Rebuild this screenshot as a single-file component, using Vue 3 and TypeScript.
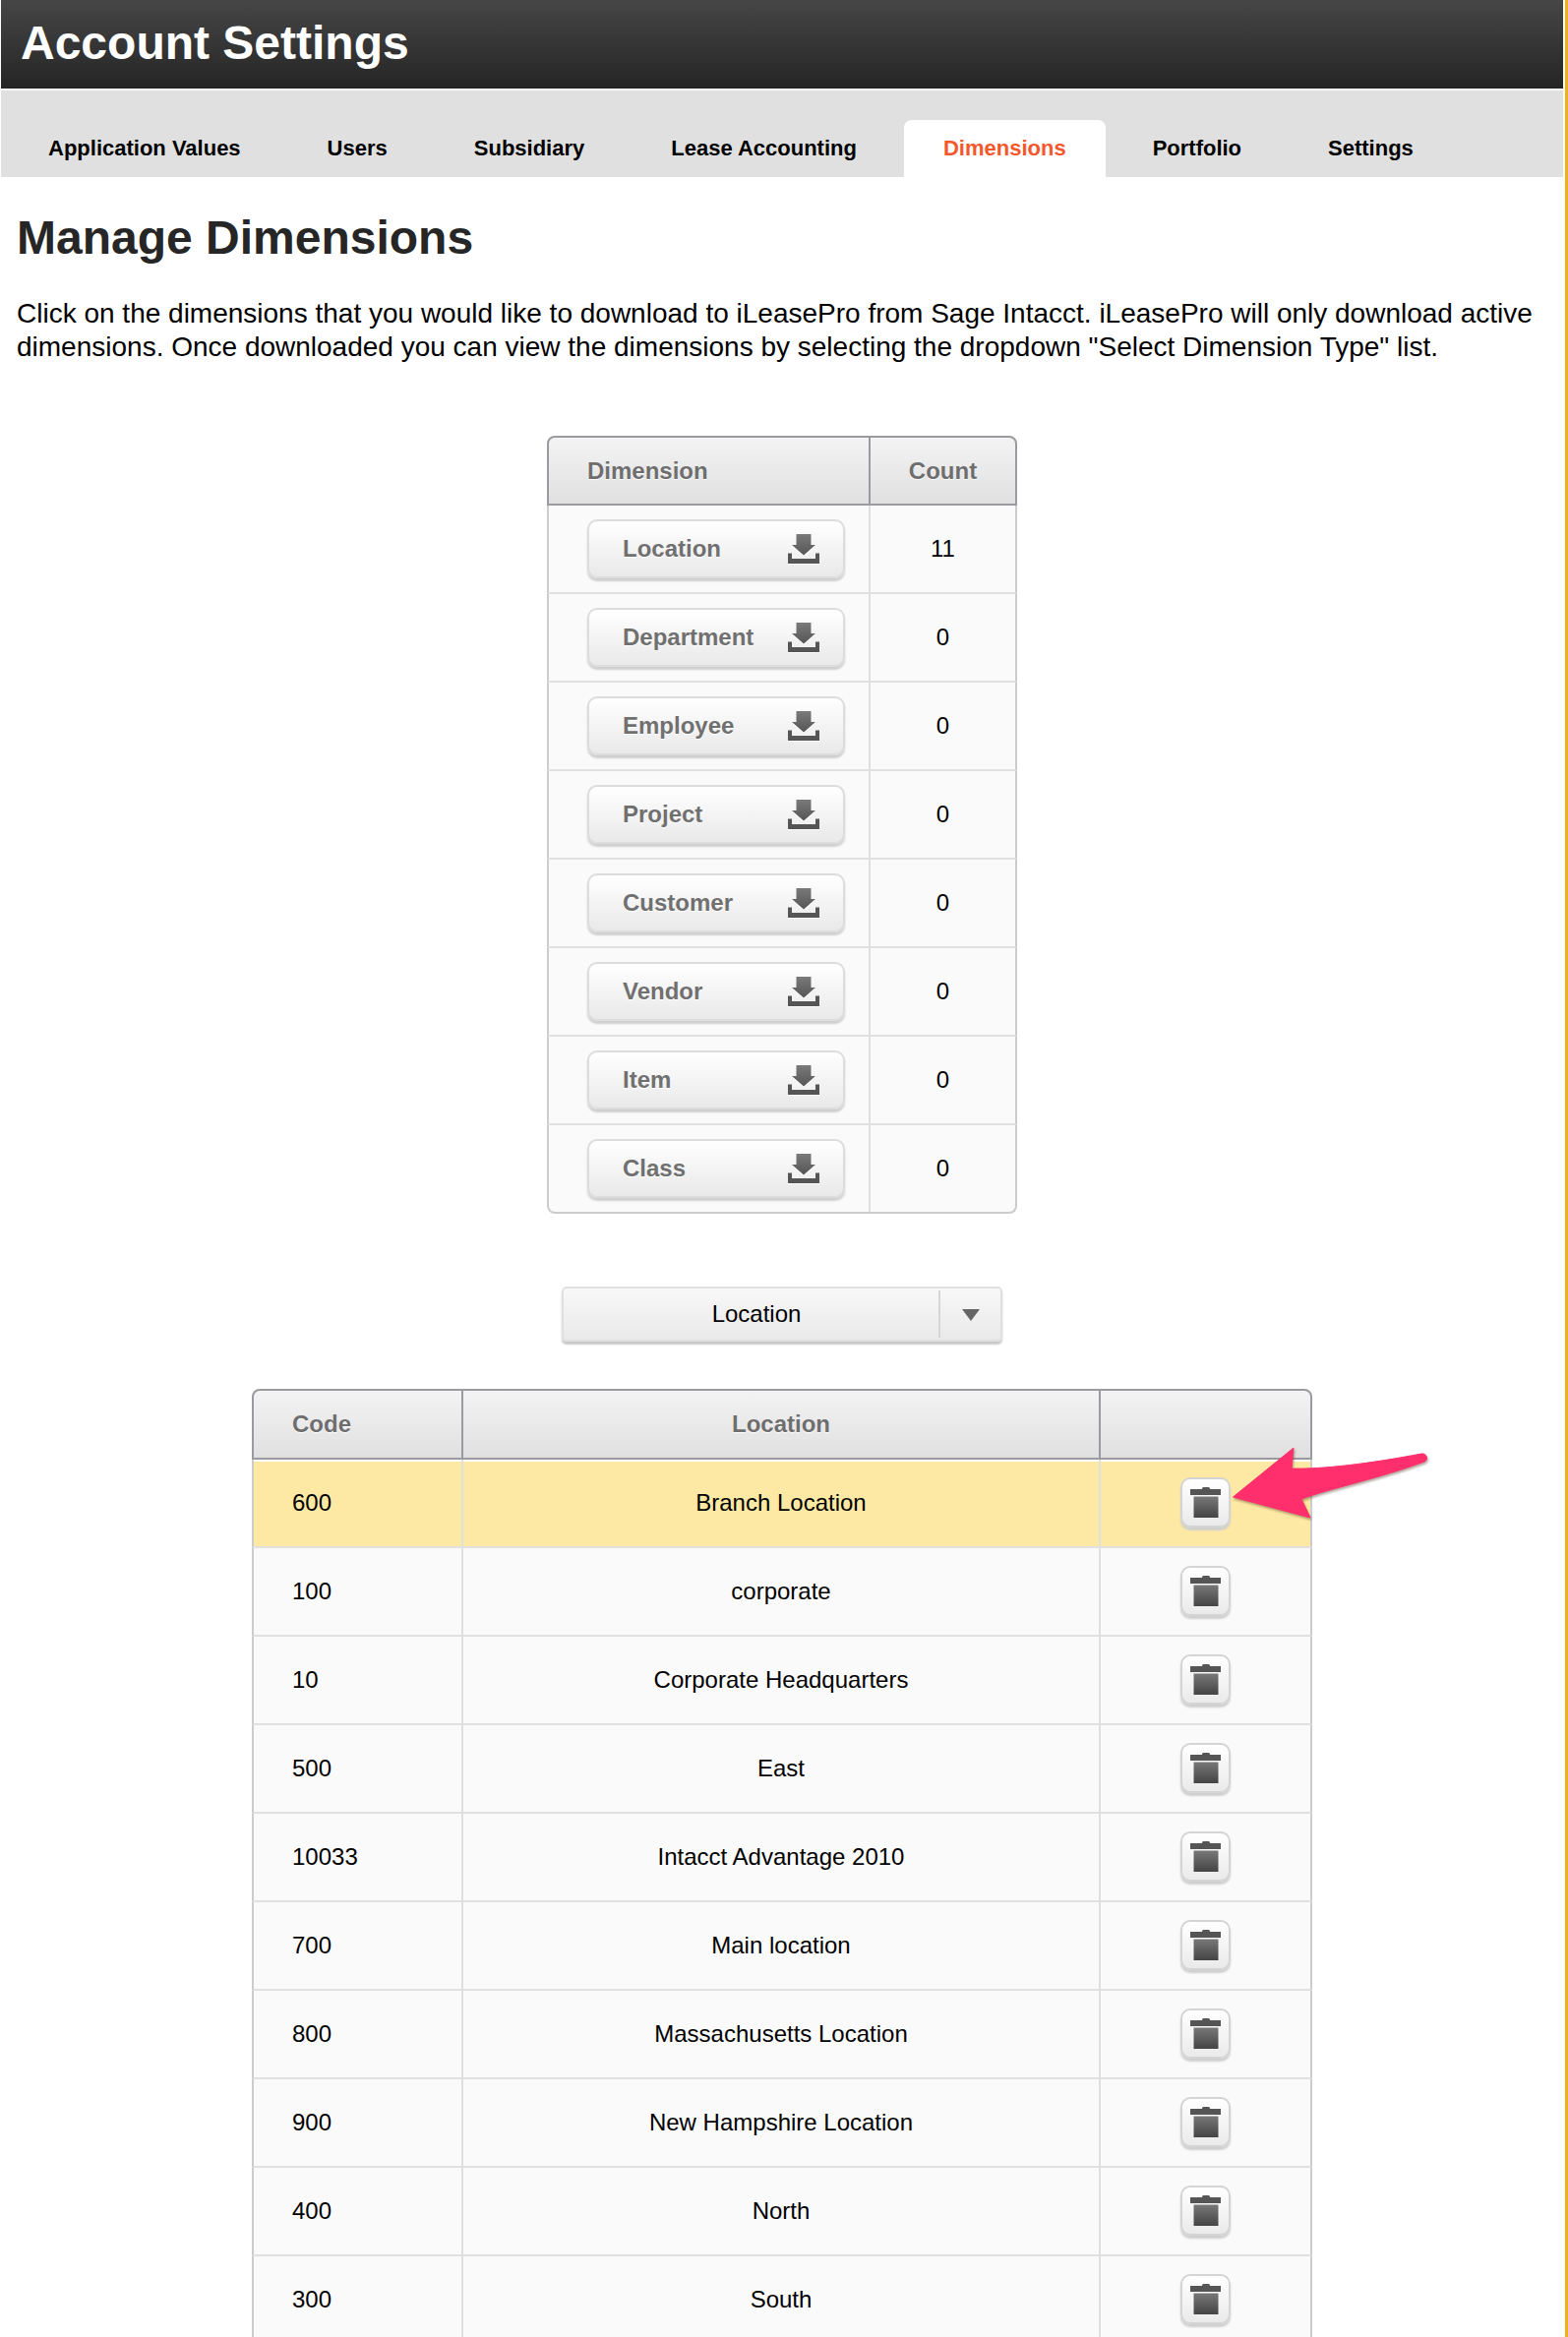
<script setup lang="ts">
const tabs: string[] = ['Application Values', 'Users', 'Subsidiary', 'Lease Accounting', 'Dimensions', 'Portfolio', 'Settings']
const dims: { name: string; count: number }[] = [
  { name: 'Location', count: 11 },
  { name: 'Department', count: 0 },
  { name: 'Employee', count: 0 },
  { name: 'Project', count: 0 },
  { name: 'Customer', count: 0 },
  { name: 'Vendor', count: 0 },
  { name: 'Item', count: 0 },
  { name: 'Class', count: 0 },
]
const locations: { code: string; name: string }[] = [
  { code: '600', name: 'Branch Location' },
  { code: '100', name: 'corporate' },
  { code: '10', name: 'Corporate Headquarters' },
  { code: '500', name: 'East' },
  { code: '10033', name: 'Intacct Advantage 2010' },
  { code: '700', name: 'Main location' },
  { code: '800', name: 'Massachusetts Location' },
  { code: '900', name: 'New Hampshire Location' },
  { code: '400', name: 'North' },
  { code: '300', name: 'South' },
]
</script>

<template>
  <div class="root">
    <svg class="defs" width="0" height="0" aria-hidden="true">
      <defs>
        <linearGradient id="iconGrad" x1="0" y1="0" x2="0" y2="1">
          <stop offset="0" stop-color="#7a7a7a" />
          <stop offset="1" stop-color="#555" />
        </linearGradient>
        <linearGradient id="binGrad" x1="0" y1="0" x2="0" y2="1">
          <stop offset="0" stop-color="#787878" />
          <stop offset="1" stop-color="#444" />
        </linearGradient>
      </defs>
    </svg>
    <div class="main">
      <header class="top"><h1 class="title">Account Settings</h1></header>
      <nav class="tabs">
        <a v-for="t in tabs" :key="t" class="tab" :class="{ active: t === 'Dimensions' }">{{ t }}</a>
      </nav>
      <section class="content">
        <h2 class="heading">Manage Dimensions</h2>
        <p class="intro">Click on the dimensions that you would like to download to iLeasePro from Sage Intacct. iLeasePro will only download active dimensions. Once downloaded you can view the dimensions by selecting the dropdown "Select Dimension Type" list.</p>

        <div class="table t1">
          <div class="head cols1">
            <div class="hc left">Dimension</div>
            <div class="hc ctr div">Count</div>
          </div>
          <div v-for="d in dims" :key="d.name" class="row cols1">
            <div class="cell btn-cell">
              <button class="dl" type="button">
                <span>{{ d.name }}</span>
                <svg class="dl-icon" width="32" height="30" viewBox="0 0 32 30">
                  <path d="M8.500 0h15v11H28L16 21.500 4 11h4.500z" fill="url(#iconGrad)" />
                  <path d="M0 19.500h4V25h24v-5.500h4V30H0z" fill="#555" />
                </svg>
              </button>
            </div>
            <div class="cell ctr div">{{ d.count }}</div>
          </div>
        </div>

        <div class="select">
          <span class="select-label">Location</span>
          <span class="select-arrow"><svg width="18" height="12" viewBox="0 0 18 12"><path d="M0 0h18L9 12z" fill="#666" /></svg></span>
        </div>

        <div class="table t2">
          <div class="head cols2">
            <div class="hc left">Code</div>
            <div class="hc ctr div">Location</div>
            <div class="hc div"></div>
          </div>
          <div v-for="(l, i) in locations" :key="l.code" class="row cols2" :class="{ hl: i === 0 }">
            <div class="cell left">{{ l.code }}</div>
            <div class="cell ctr div">{{ l.name }}</div>
            <div class="cell ctr div">
              <button class="del" type="button" aria-label="Delete">
                <svg width="32" height="32" viewBox="0 0 32 32">
                  <path d="M12 2.500q0-1.500 1.500-1.500h5q1.500 0 1.500 1.500V3h11v6H0V3h12z" fill="#555" />
                  <path d="M3.500 10.500h25V32h-25z" fill="url(#binGrad)" />
                </svg>
              </button>
            </div>
          </div>
          <svg class="arrow" width="204" height="76" viewBox="0 0 204 76">
            <path d="M1.500 51 63 1l-2 21c30 1 80-5 132-15 5-1 8 6 3 8-46 17-95 27-125 38l9 19z" fill="#ff2e6c" stroke="#ff2e6c" stroke-width="1" stroke-linejoin="round" />
          </svg>
        </div>
      </section>
    </div>
    <div class="strip"></div>
  </div>
</template>

<style>
html, body { margin: 0; background: #fff; overflow: hidden; }
</style>

<style scoped>
.root {
  display: flex;
  width: 1594px;
  height: 2376px;
  overflow: hidden;
  background: #fff;
  font-family: "Liberation Sans", Arial, sans-serif;
  color: #000;
}
.defs { position: absolute; }
.main { width: 1588px; margin-left: 1px; flex: none; }
.strip { width: 3px; margin-left: 2px; flex: none; background: #eeb11c; }

.top {
  height: 90px;
  background: linear-gradient(#464646, #252525);
  margin-bottom: 2px;
  display: flex;
  align-items: center;
  padding-left: 20px;
  box-sizing: border-box;
}
.title {
  margin: 0 0 3px;
  font-size: 48px;
  line-height: 56px;
  font-weight: 700;
  color: #fff;
}
.tabs {
  height: 88px;
  background: #e0e0e0;
  display: flex;
  align-items: flex-end;
  padding-left: 8px;
  gap: 8px;
  box-sizing: border-box;
}
.tab {
  height: 58px;
  padding: 0 40px;
  display: flex;
  align-items: center;
  font-size: 22px;
  font-weight: 700;
  color: #000;
  border-radius: 8px 8px 0 0;
}
.tab.active { background: #fff; color: #f4572c; }

.content { padding: 0 0 0 16px; }
.heading {
  margin: 34px 0 0;
  font-size: 48px;
  line-height: 56px;
  font-weight: 700;
  color: #262626;
}
.intro {
  margin: 32px 0 0;
  font-size: 28px;
  line-height: 34px;
  width: 1560px;
  color: #000;
}

.table {
  position: relative;
  box-sizing: border-box;
}
.t1 { width: 478px; margin: 73px 0 0 539px; }
.t2 { width: 1078px; margin: 48px 0 0 239px; }
.cols1 { display: grid; grid-template-columns: 325px 149px; }
.cols2 { display: grid; grid-template-columns: 211px 648px 215px; }

.head {
  height: 71px;
  box-sizing: border-box;
  border: 2px solid #9b9b9f;
  border-radius: 8px 8px 0 0;
  background: linear-gradient(#f3f3f3, #e0e0e0);
  font-size: 24px;
  font-weight: 700;
  color: #6e6e6e;
  text-shadow: 0 1px 1px #fff;
}
.t2 .head { height: 72px; }
.hc { display: flex; align-items: center; box-sizing: border-box; height: 100%; }
.hc.div { border-left: 2px solid #9b9b9f; }
.left { padding-left: 39px; }
.ctr { justify-content: center; text-align: center; }

.row {
  height: 90px;
  box-sizing: border-box;
  border-left: 2px solid #ccc;
  border-right: 2px solid #ccc;
  border-bottom: 2px solid #e0e0e0;
  background: #fafafa;
  font-size: 24px;
}
.row:last-of-type { border-bottom-color: #ccc; }
.t1 .row:last-of-type { border-radius: 0 0 8px 8px; }
.row.hl { background: #fde9a3; box-shadow: inset 0 2px 0 #fff; }
.cell { display: flex; align-items: center; box-sizing: border-box; height: 100%; }
.cell.div { border-left: 2px solid #e0e0e0; }
.btn-cell { padding-left: 39px; }

.dl {
  width: 262px;
  height: 60px;
  margin-top: 0;
  padding: 0 24px 0 34px;
  display: flex;
  align-items: center;
  justify-content: space-between;
  box-sizing: border-box;
  border: 2px solid #dcdcdc;
  border-radius: 10px;
  background: linear-gradient(#fff, #e9e9e9);
  box-shadow: 0 3px 2px #cfcfcf;
  font-family: inherit;
  font-size: 24px;
  font-weight: 700;
  color: #707070;
  text-shadow: 0 1px 0 #fff;
}
.dl-icon { filter: drop-shadow(0 1px 0 #fff); }

.select {
  width: 448px;
  height: 56px;
  margin: 74px 0 0 554px;
  display: flex;
  align-items: center;
  box-sizing: border-box;
  border: 2px solid #e0e0e0;
  border-radius: 5px;
  background: linear-gradient(#f8f8f8, #e9e9e9);
  box-shadow: 0 3px 2px #c8c8c8;
  font-size: 24px;
}
.select-label { width: 392px; text-align: center; margin-right: -11px; }
.select-arrow {
  flex: 1;
  height: 48px;
  display: flex;
  align-items: center;
  justify-content: center;
  border-left: 2px solid #d6d6d6;
  padding-top: 2px;
  box-sizing: border-box;
}

.del {
  width: 51px;
  height: 51px;
  margin-top: -2px;
  padding: 0;
  display: flex;
  align-items: center;
  justify-content: center;
  box-sizing: border-box;
  border: 2px solid #d4d4d4;
  border-radius: 10px;
  background: linear-gradient(#fff, #eaeaea);
  box-shadow: 0 3px 2px #cfcfcf;
}
.arrow {
  position: absolute;
  left: 996px;
  top: 59px;
  filter: drop-shadow(1px 2px 1px rgba(90, 60, 40, 0.45));
}
</style>
